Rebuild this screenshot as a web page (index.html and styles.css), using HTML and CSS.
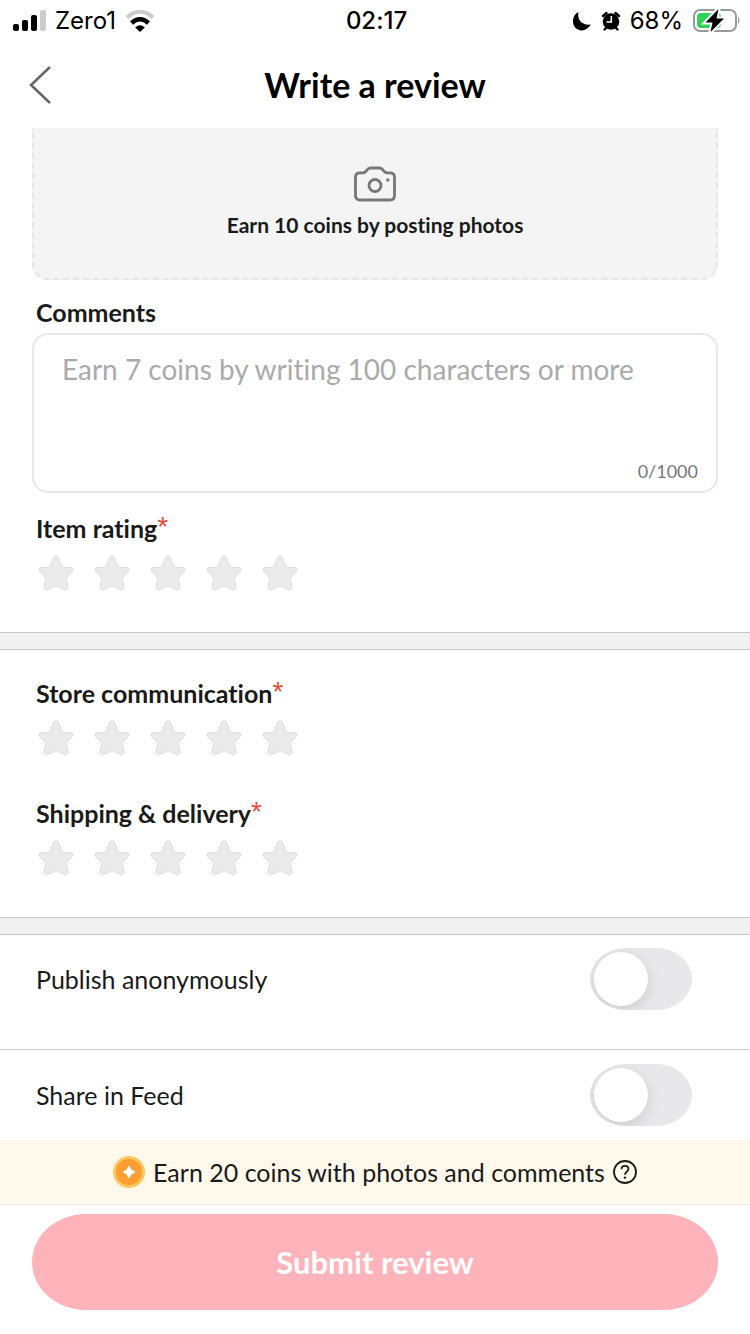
FILE: index.html
```html
<!DOCTYPE html>
<html lang="en">
<head>
<meta charset="utf-8">
<meta name="viewport" content="width=device-width, initial-scale=1">
<title>Write a review</title>
<link rel="stylesheet" href="styles.css">
</head>
<body>
<svg class="sprite" width="0" height="0" aria-hidden="true">
  <symbol id="star" viewBox="0 0 36 36">
    <path d="M15.6 2.2C16.6 0.6 19.4 0.6 20.4 2.2L24 11.6Q24.3 12.3 25.100 12.400L32.600 12.600C35.200 12.800 35.600 15.400 34 17L28.600 22Q28 22.600 28.200 23.500L30 31.600C30.400 34.400 28.400 35.400 26.200 34.500L18.800 31.300Q18 30.900 17.200 31.300L9.800 34.500C7.600 35.400 5.600 34.400 6 31.600L7.800 23.500Q8 22.600 7.400 22L2 17C0.400 15.400 0.800 12.800 3.400 12.600L10.900 12.400Q11.700 12.300 12 11.600Z" fill="#ebebeb" stroke="#dddddd"/>
  </symbol>
</svg>
<div class="app">
  <div class="status">
    <div class="status-left">
      <svg width="33" height="22" viewBox="0 0 33 22" aria-hidden="true">
        <rect x="0" y="14" width="6" height="7" rx="2"/>
        <rect x="9" y="10" width="6" height="11" rx="2"/>
        <rect x="18" y="5" width="6" height="16" rx="2"/>
        <rect x="27" y="0" width="6" height="21" rx="2" fill="#cccccc"/>
      </svg>
      <span>Zero1</span>
      <svg width="30" height="22" viewBox="0 0 30 22" aria-hidden="true">
        <path d="M2 7.500Q15 -4 28 7.500" fill="none" stroke="#cccccc" stroke-width="4"/>
        <path d="M6.500 13Q15 5.500 23.500 13" fill="none" stroke="#000" stroke-width="4.500"/>
        <path d="M10.200 17.500Q15 13 19.800 17.500L15 22Z"/>
      </svg>
    </div>
    <span class="clock">02:17</span>
    <div class="status-right">
      <svg width="20" height="20" viewBox="0 0 20 20" aria-hidden="true">
        <path d="M6.500 1C5 8 9 14.500 18.800 13.600C16.500 17.500 13 19.500 9.500 19.400C4.500 19.200 1 15.300 1 10.500C1 6 3 2.500 6.500 1Z"/>
      </svg>
      <svg width="20" height="20" viewBox="0 0 20 20" aria-hidden="true">
        <circle cx="10" cy="10.500" r="8.300"/>
        <path d="M2 5L5.500 2M18 5L14.500 2M3.500 18.500L6 16M16.500 18.500L14 16" stroke="#000" stroke-width="2.400" stroke-linecap="round"/>
        <path d="M10.300 5V11H5.500" fill="none" stroke="#fff" stroke-width="1.600"/>
      </svg>
      <span>68%</span>
      <svg width="48" height="26" viewBox="0 0 48 26" aria-hidden="true">
        <rect x="2" y="2" width="42" height="21" rx="6" fill="#fff" stroke="#999" stroke-width="2"/>
        <path d="M46 9Q49 12.500 46 16Z" fill="#999"/>
        <rect x="5" y="5" width="24" height="15" rx="4" fill="#30d158"/>
        <path d="M26.500 1L13.500 14.500H20.500L18.500 24L32 10.500H24.500Z" stroke="#fff" stroke-width="4"/>
        <path d="M26.500 1L13.500 14.500H20.500L18.500 24L32 10.500H24.500Z"/>
      </svg>
    </div>
  </div>

  <header class="header">
    <button class="back" type="button" aria-label="Back">
      <svg width="24" height="40" viewBox="0 0 24 40" aria-hidden="true"><path d="M21 2L2 20L21 38" fill="none" stroke="#666" stroke-width="2.500"/></svg>
    </button>
    <h1 class="title">Write a review</h1>
  </header>

  <form class="form">
    <section class="section">
      <button class="upload" type="button">
        <svg width="42" height="36" viewBox="1 0 42 36" fill="none" stroke="#777" stroke-width="2.800" aria-hidden="true">
          <path d="M7 6.800H10C12 6.800 12.500 5.800 13.700 4.300C15 2.500 15.800 2 17.500 2H26.500C28.200 2 29 2.500 30.300 4.300C31.500 5.800 32 6.800 34 6.800H37Q41.500 6.800 41.500 11V29.500Q41.500 34 37 34H7Q2.500 34 2.500 29.500V11Q2.500 6.800 7 6.800Z"/>
          <circle cx="22" cy="19.500" r="6"/>
          <circle cx="34.800" cy="14" r="1.700" fill="#777" stroke="none"/>
        </svg>
        <span>Earn 10 coins by posting photos</span>
      </button>
      <label class="label" for="comments">Comments</label>
      <div class="comment-box">
        <textarea class="comment" id="comments" maxlength="1000" placeholder="Earn 7 coins by writing 100 characters or more"></textarea>
        <span class="counter">0/1000</span>
      </div>
      <fieldset class="rating">
        <legend class="label">Item rating<span class="required">*</span></legend>
        <div class="stars">
          <label class="star"><input type="radio" name="item" aria-label="1 star"><svg><use href="#star"/></svg></label>
          <label class="star"><input type="radio" name="item" aria-label="2 stars"><svg><use href="#star"/></svg></label>
          <label class="star"><input type="radio" name="item" aria-label="3 stars"><svg><use href="#star"/></svg></label>
          <label class="star"><input type="radio" name="item" aria-label="4 stars"><svg><use href="#star"/></svg></label>
          <label class="star"><input type="radio" name="item" aria-label="5 stars"><svg><use href="#star"/></svg></label>
        </div>
      </fieldset>
    </section>

    <div class="divider"></div>

    <section class="section store">
      <fieldset class="rating">
        <legend class="label">Store communication<span class="required">*</span></legend>
        <div class="stars">
          <label class="star"><input type="radio" name="store" aria-label="1 star"><svg><use href="#star"/></svg></label>
          <label class="star"><input type="radio" name="store" aria-label="2 stars"><svg><use href="#star"/></svg></label>
          <label class="star"><input type="radio" name="store" aria-label="3 stars"><svg><use href="#star"/></svg></label>
          <label class="star"><input type="radio" name="store" aria-label="4 stars"><svg><use href="#star"/></svg></label>
          <label class="star"><input type="radio" name="store" aria-label="5 stars"><svg><use href="#star"/></svg></label>
        </div>
      </fieldset>
      <fieldset class="rating">
        <legend class="label">Shipping &amp; delivery<span class="required">*</span></legend>
        <div class="stars">
          <label class="star"><input type="radio" name="shipping" aria-label="1 star"><svg><use href="#star"/></svg></label>
          <label class="star"><input type="radio" name="shipping" aria-label="2 stars"><svg><use href="#star"/></svg></label>
          <label class="star"><input type="radio" name="shipping" aria-label="3 stars"><svg><use href="#star"/></svg></label>
          <label class="star"><input type="radio" name="shipping" aria-label="4 stars"><svg><use href="#star"/></svg></label>
          <label class="star"><input type="radio" name="shipping" aria-label="5 stars"><svg><use href="#star"/></svg></label>
        </div>
      </fieldset>
    </section>

    <div class="divider"></div>

    <div class="option option-tall">
      <label for="anonymous">Publish anonymously</label>
      <input class="switch" id="anonymous" type="checkbox" role="switch">
    </div>
    <div class="option">
      <label for="feed">Share in Feed</label>
      <input class="switch" id="feed" type="checkbox" role="switch">
    </div>

    <footer class="footer">
      <div class="notice">
        <svg width="32" height="32" viewBox="0 0 32 32" aria-hidden="true">
          <circle cx="16" cy="16" r="16" fill="#fbc95c"/>
          <circle cx="16" cy="16" r="13" fill="#ff9d33"/>
          <path d="M16 10Q17.300 14.700 22 16Q17.300 17.300 16 22Q14.700 17.300 10 16Q14.700 14.700 16 10Z" fill="#fff" stroke="#fff" stroke-linejoin="round"/>
        </svg>
        <span>Earn 20 coins with photos and comments</span>
        <button class="help" type="button" aria-label="About coins">
          <svg width="24" height="24" viewBox="0 0 24 24" fill="none" stroke="#1a1a1a" stroke-width="1.800" aria-hidden="true">
            <circle cx="12" cy="12" r="11"/>
            <path d="M8.500 9.300C8.500 7 10 5.800 12 5.800C14 5.800 15.500 7 15.500 9C15.500 11.500 12 11.500 12 14.800"/>
            <circle cx="12" cy="17.600" r="1.200" fill="#1a1a1a" stroke="none"/>
          </svg>
        </button>
      </div>
      <div class="submit-bar">
        <button class="submit" type="submit">Submit review</button>
      </div>
    </footer>
  </form>
</div>
</body>
</html>
```
FILE: styles.css
```css
* {
  box-sizing: border-box;
}

body {
  margin: 0;
  background: #fff;
  color: #1a1a1a;
  font-family: Lato, sans-serif;
  font-size: 25px;
  font-variant-ligatures: none;
  line-height: 32px;
}

button,
textarea {
  font: inherit;
  font-variant-ligatures: none;
  color: inherit;
}

button {
  border: 0;
  padding: 0;
  background: none;
}

svg {
  display: block;
  flex: none;
}

.sprite {
  position: absolute;
}

.app,
.form {
  display: flex;
  flex-direction: column;
}

.app {
  min-height: 100vh;
}

.form {
  flex: 1;
}

.status {
  display: grid;
  grid-template-columns: 1fr auto 1fr;
  align-items: center;
  height: 41px;
  padding: 0 10px 0 13px;
  color: #000;
  font-family: Inter, sans-serif;
  font-size: 24px;
}

.status-left,
.status-right {
  display: flex;
  align-items: center;
  gap: 9px;
}

.status-right {
  justify-content: flex-end;
}

.clock {
  font-weight: 500;
}

.header {
  display: grid;
  grid-template-columns: 40px 1fr 40px;
  align-items: center;
  height: 87px;
  padding: 0 29px;
}

.title {
  margin: 0;
  color: #000;
  font-size: 34px;
  line-height: 40px;
  text-align: center;
}

.section {
  padding: 0 32px 41px;
}

.upload {
  display: flex;
  flex-direction: column;
  align-items: center;
  gap: 7px;
  width: 100%;
  padding: 38px 0 37px;
  border: 2px dashed #e6e6e6;
  border-top: 0;
  border-radius: 0 0 16px 16px;
  background: #f4f4f4;
  font-size: 21px;
  font-weight: 700;
}

.label {
  display: block;
  padding: 0 4px;
  font-weight: 700;
}

.upload + .label {
  margin: 16px 0 5px;
}

.comment-box {
  display: flex;
  flex-direction: column;
  padding: 16px 18px 4px 28px;
  border: 2px solid #e9e9e9;
  border-radius: 16px;
}

.comment {
  height: 104px;
  padding: 0;
  border: 0;
  outline: 0;
  resize: none;
  background: none;
  font-size: 28px;
  line-height: 36px;
}

.comment::placeholder {
  color: #aaa;
}

.counter {
  align-self: flex-end;
  color: #777;
  font-size: 18px;
}

.rating {
  min-width: 0;
  margin: 19px 0 0;
  padding: 0;
  border: 0;
}

.required {
  color: #e84b3c;
  font-family: "Liberation Sans", sans-serif;
  font-size: 28px;
  font-weight: 400;
  line-height: 16px;
  vertical-align: 2px;
}

.stars {
  display: flex;
  gap: 20px;
  padding: 11px 6px 0;
}

.star,
.star svg {
  width: 36px;
  height: 36px;
}

.star {
  display: grid;
}

.star input,
.star svg {
  grid-area: 1 / 1;
}

.star input {
  margin: 0;
  opacity: 0;
}

.divider {
  height: 18px;
  border: solid #c6c6c6;
  border-width: 1px 0;
  background: #f1f1f1;
}

.store {
  display: grid;
  gap: 41px;
  padding-top: 27px;
}

.store .rating {
  margin: 0;
}

.option {
  display: flex;
  justify-content: space-between;
  align-items: center;
  padding: 14px 58px 14px 36px;
}

.option-tall {
  padding: 13px 58px 39px 36px;
  border-bottom: 1px solid #c6c6c6;
}

.switch {
  appearance: none;
  width: 102px;
  height: 62px;
  margin: 0;
  padding: 4px;
  overflow: hidden;
  border-radius: 36px / 31px;
  background: #e8e8ea;
}

.switch::before {
  content: "";
  display: block;
  width: 54px;
  height: 54px;
  border-radius: 50%;
  background: #fff;
  box-shadow: 0 4px 14px rgba(0, 0, 0, 0.12);
}

.switch:checked::before {
  margin-left: auto;
}

.footer {
  margin-top: auto;
}

.notice {
  display: flex;
  justify-content: center;
  align-items: center;
  gap: 8px;
  min-height: 65px;
  border-bottom: 1px solid #eee;
  background: #fff9eb;
}

.submit-bar {
  padding: 9px 32px 24px;
}

.submit {
  width: 100%;
  height: 96px;
  border-radius: 54px / 48px;
  background: #ffb3ba;
  color: #fff;
  font-size: 31px;
  font-weight: 700;
}
```
